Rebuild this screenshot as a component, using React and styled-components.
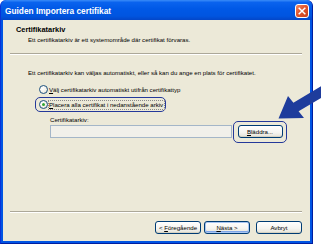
import React from "react";
import styled, { createGlobalStyle } from "styled-components";

const Global = createGlobalStyle`
  html, body { margin: 0; padding: 0; background: #fff; }
  body { font-family: "Liberation Sans", Arial, sans-serif; }
`;

const Page = styled.div`
  position: relative;
  width: 321px;
  height: 245px;
`;

const Window = styled.div`
  width: 313px;
  height: 244px;
  box-sizing: border-box;
  display: flex;
  flex-direction: column;
  background: #0054e3;
  border-top-left-radius: 6px;
  border-top-right-radius: 6px;
  border-left: 1px solid #0831d9;
  border-right: 1px solid #001ea0;
  border-bottom: 1px solid #001ea0;
`;

const TitleBar = styled.div`
  height: 20px;
  flex: 0 0 20px;
  display: flex;
  align-items: center;
  justify-content: space-between;
  padding: 1px 2px 0 4px;
  box-sizing: border-box;
  background-color: #0058e6;
  background-image: linear-gradient(#3a8cf8, #0a63ee 12%, #0058e6 45%, #0055e0 80%, #0346c8);
  border-top-left-radius: 6px;
  border-top-right-radius: 6px;
`;

const WindowCaption = styled.span`
  color: #fff;
  font-weight: bold;
  font-size: 8.3px;
  line-height: 10px;
`;

const CloseButton = styled.div`
  width: 12px;
  height: 12px;
  margin-right: 1px;
  border: 1px solid #fff;
  border-radius: 3px;
  background: linear-gradient(135deg, #f08a68 0%, #e2552c 45%, #c8401c 100%);
  display: flex;
  align-items: center;
  justify-content: center;
`;

const Content = styled.div`
  flex: 1;
  margin: 0 2px 2px 2px;
  background: #ece9d8;
  display: flex;
  flex-direction: column;
`;

const Header = styled.div`
  padding: 5px 0 0 13px;
  display: flex;
  flex-direction: column;
`;

const HeaderTitle = styled.div`
  font-weight: bold;
  font-size: 7.4px;
  line-height: 10px;
  color: #000;
`;

const HeaderSub = styled.div`
  font-size: 6.1px;
  line-height: 10px;
  padding-left: 12px;
  color: #000;
`;

const Separator = styled.div`
  margin: ${(p) => p.$top}px 8px 0 7px;
  height: 1px;
  background: #aca899;
  border-bottom: 1px solid #fff;
`;

const Body = styled.div`
  flex: 1;
  padding: 13px 0 0 25px;
  display: flex;
  flex-direction: column;
`;

const Text = styled.div`
  font-size: 6.1px;
  line-height: 10px;
  color: #000;
  margin-left: ${(p) => p.$indent || 0}px;
  margin-top: ${(p) => p.$top || 0}px;
`;

const RadioRow = styled.div`
  align-self: flex-start;
  display: flex;
  align-items: center;
  gap: 1px;
  height: 15px;
  box-sizing: border-box;
  margin-left: 7px;
  margin-top: ${(p) => p.$top || 0}px;
  padding: 0 1px 0 2.5px;
  border: 1.5px solid ${(p) => (p.$highlight ? "#24399a" : "transparent")};
  border-radius: 5px;
`;

const RadioCircle = styled.span`
  width: 9px;
  height: 9px;
  box-sizing: border-box;
  border-radius: 50%;
  border: 1px solid #1c5180;
  background: radial-gradient(circle at 35% 35%, #ffffff 0%, #f2f1ea 55%, #d6d3c6 100%);
  display: flex;
  align-items: center;
  justify-content: center;
  flex: 0 0 auto;
  &::after {
    content: "";
    width: 3px;
    height: 3px;
    border-radius: 50%;
    background: ${(p) => (p.$checked ? "#31a531" : "transparent")};
  }
`;

const RadioLabel = styled.span`
  font-size: 6.1px;
  line-height: 8px;
  color: #000;
  padding: 0 0.5px;
  outline: ${(p) => (p.$focused ? "1px dotted #8a8a8a" : "none")};
`;

const Key = styled.span`
  text-decoration: underline;
`;

const FieldRow = styled.div`
  display: flex;
  align-items: center;
  gap: 6px;
  margin-left: 22px;
`;

const TextBox = styled.div`
  width: 182px;
  height: 13px;
  box-sizing: border-box;
  border: 1px solid #a4b6c8;
  background: #f1f0ea;
`;

const Button = styled.div`
  width: ${(p) => p.$w || 46}px;
  height: 13px;
  box-sizing: border-box;
  border: 1px solid #003c74;
  border-radius: 3px;
  background: linear-gradient(to bottom, #ffffff 0%, #f5f4ef 60%, #e3e1d6 100%);
  box-shadow: ${(p) =>
    p.$default
      ? "inset 0 0 0 1px #a9c6f2, inset 0 -1px 0 1px #7ea4e6"
      : "inset 0 -1px 0 #d6d2c2"};
  display: flex;
  align-items: center;
  justify-content: center;
  font-size: 6.1px;
  line-height: 8px;
  color: #000;
`;

const Ring = styled.div`
  padding: 3px 3.5px 3.5px 4px;
  margin: -4.5px -5px -5px -5.5px;
  border: 1.5px solid #24399a;
  border-radius: 5px;
  display: flex;
`;

const ButtonRow = styled.div`
  display: flex;
  justify-content: flex-end;
  align-items: center;
  padding: 8px 8px 7px 0;
`;

const Gap = styled.span`
  width: ${(p) => p.$w}px;
  flex: 0 0 auto;
`;

const ArrowLayer = styled.svg`
  position: absolute;
  left: 270px;
  top: 78px;
  width: 51px;
  height: 47px;
`;

export default function App() {
  return (
    <>
      <Global />
      <Page>
        <Window>
          <TitleBar>
            <WindowCaption>Guiden Importera certifikat</WindowCaption>
            <CloseButton>
              <svg width="8" height="8" viewBox="0 0 8 8">
                <path d="M1.2 1.2 L6.8 6.8 M6.8 1.2 L1.2 6.8" stroke="#fff" strokeWidth="1.5" strokeLinecap="square" />
              </svg>
            </CloseButton>
          </TitleBar>
          <Content>
            <Header>
              <HeaderTitle>Certifikatarkiv</HeaderTitle>
              <HeaderSub>Ett certifikatarkiv är ett systemområde där certifikat förvaras.</HeaderSub>
            </Header>
            <Separator $top={8} />
            <Body>
              <Text>Ett certifikatarkiv kan väljas automatiskt, eller så kan du ange en plats för certifikatet.</Text>
              <RadioRow $top={4}>
                <RadioCircle />
                <RadioLabel>
                  <Key>V</Key>älj certifikatarkiv automatiskt utifrån certifikattyp
                </RadioLabel>
              </RadioRow>
              <RadioRow $highlight>
                <RadioCircle $checked />
                <RadioLabel $focused>
                  <Key>P</Key>lacera alla certifikat i nedanstående arkiv
                </RadioLabel>
              </RadioRow>
              <Text $indent={22} $top={3}>Certifikatarkiv:</Text>
              <FieldRow>
                <TextBox />
                <Ring>
                  <Button $w={45}>
                    <span><Key>B</Key>läddra...</span>
                  </Button>
                </Ring>
              </FieldRow>
            </Body>
            <Separator $top={0} />
            <ButtonRow>
              <Button>
                <span>&lt; <Key>F</Key>öregående</span>
              </Button>
              <Gap $w={3} />
              <Button $default>
                <span><Key>N</Key>ästa &gt;</span>
              </Button>
              <Gap $w={6} />
              <Button>
                <span>Avbryt</span>
              </Button>
            </ButtonRow>
          </Content>
        </Window>
        <ArrowLayer viewBox="270 78 51 47">
          <polygon
            points="278.5,118.5 304,118 298.6,111.3 333,90.9 327.8,82.3 293.4,102.7 288,96"
            fill="#1e3c9c"
          />
        </ArrowLayer>
      </Page>
    </>
  );
}
